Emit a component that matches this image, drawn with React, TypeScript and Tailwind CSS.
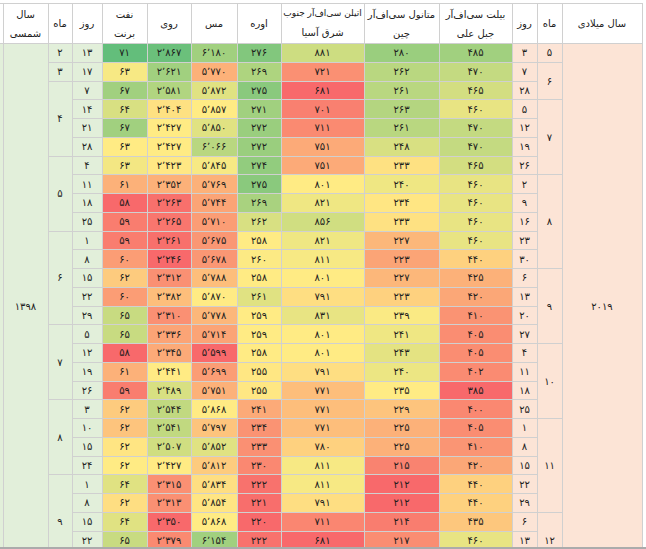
import React from "react";

const FA = "۰۱۲۳۴۵۶۷۸۹";
const fa = (v: number | string) =>
  String(v)
    .replace(/\d/g, (d) => FA[Number(d)])
    .replace(/,/g, "٬");

// excel-like red / yellow / green colour scale, s in [-1, 1]
const RED = [248, 105, 107];
const YEL = [255, 235, 132];
const GRN = [99, 190, 123];
function heat(s: number) {
  const to = s < 0 ? RED : GRN;
  const t = Math.abs(s);
  const c = YEL.map((y, i) => Math.round(y + (to[i] - y) * t));
  return `rgb(${c[0]}, ${c[1]}, ${c[2]})`;
}

const persian = [
  { m: 2, days: [13] },
  { m: 3, days: [17] },
  { m: 4, days: [7, 14, 21, 28] },
  { m: 5, days: [4, 11, 18, 25] },
  { m: 6, days: [1, 8, 15, 22, 29] },
  { m: 7, days: [5, 12, 19, 26] },
  { m: 8, days: [3, 10, 15, 24] },
  { m: 9, days: [1, 8, 15, 22, 29] },
];

const gregorian = [
  { m: 5, days: [3] },
  { m: 6, days: [7, 28] },
  { m: 7, days: [5, 12, 19, 26] },
  { m: 8, days: [2, 9, 16, 23, 30] },
  { m: 9, days: [6, 13, 20, 27] },
  { m: 10, days: [4, 11, 18, 25] },
  { m: 11, days: [1, 8, 15, 22, 29] },
  { m: 12, days: [6, 13, 20] },
];

// columns, right to left: billet, methanol, ethylene, urea, copper, zinc, brent
const cols: { v: (string | number)[]; s: number[] }[] = [
  {
    v: [485, 470, 465, 460, 470, 470, 465, 460, 460, 460, 460, 440, 425, 420, 410, 405, 405, 402, 385, 400, 405, 410, 420, 440, 440, 435, 460, 460],
    s: [0.6, 0.38, 0.28, 0.15, 0.38, 0.38, 0.28, 0.15, 0.15, 0.15, 0.15, -0.2, -0.45, -0.52, -0.68, -0.72, -0.72, -0.74, -1, -0.76, -0.72, -0.66, -0.52, -0.2, -0.2, -0.28, 0.15, 0.15],
  },
  {
    v: [280, 262, 261, 263, 261, 248, 233, 240, 234, 233, 227, 223, 227, 223, 239, 241, 243, 240, 235, 229, 225, 225, 215, 212, 212, 214, 217, 217],
    s: [0.65, 0.45, 0.45, 0.48, 0.45, 0.25, -0.08, 0.1, -0.04, -0.08, -0.4, -0.55, -0.4, -0.2, 0.03, 0.1, 0.17, 0.12, 0, -0.3, -0.45, -0.45, -0.8, -1, -1, -0.85, -0.72, -0.7],
  },
  {
    v: [881, 721, 681, 701, 711, 751, 751, 801, 821, 856, 821, 811, 801, 791, 831, 801, 801, 791, 771, 771, 771, 780, 811, 811, 791, 711, 681, 681],
    s: [0.32, -0.7, -1, -0.82, -0.75, -0.5, -0.5, 0, 0.1, 0.3, 0.1, 0.05, 0, -0.1, 0.15, 0, 0, -0.1, -0.35, -0.35, -0.35, -0.2, 0.05, 0.05, -0.1, -0.78, -1, -0.9],
  },
  {
    v: [276, 269, 275, 271, 272, 272, 274, 275, 269, 262, 258, 260, 258, 261, 259, 259, 258, 255, 255, 241, 234, 233, 230, 222, 221, 220, 222, 220],
    s: [0.8, 0.52, 0.75, 0.6, 0.65, 0.65, 0.7, 0.75, 0.55, 0.25, 0, 0.02, 0, 0.2, 0, 0, 0, -0.03, -0.03, -0.5, -0.68, -0.7, -0.76, -0.93, -0.96, -1, -0.93, -0.9],
  },
  {
    v: ["6,180", "5,770", "5,872", "5,857", "5,850", "6,066", "5,845", "5,769", "5,744", "5,710", "5,675", "5,678", "5,788", "5,870", "5,778", "5,714", "5,599", "5,699", "5,751", "5,868", "5,797", "5,852", "5,812", "5,834", "5,854", "5,868", "6,154", "6,160"],
    s: [0.6, -0.45, 0.2, 0, 0.2, 0.45, 0.05, -0.45, -0.55, -0.6, -0.65, -0.65, -0.35, 0, -0.4, -0.55, -1, -0.6, -0.45, 0, -0.3, 0.2, -0.25, -0.1, -0.05, 0, 0.6, 0.5],
  },
  {
    v: ["2,867", "2,621", "2,581", "2,404", "2,427", "2,427", "2,423", "2,352", "2,263", "2,265", "2,261", "2,246", "2,312", "2,382", "2,310", "2,336", "2,345", "2,441", "2,489", "2,544", "2,541", "2,507", "2,427", "2,315", "2,313", "2,350", "2,379", "2,274"],
    s: [0.95, 0.6, 0.5, -0.08, 0, 0, -0.02, -0.45, -0.95, -0.9, -0.95, -1, -0.7, -0.35, -0.7, -0.55, -0.5, 0, 0.25, 0.4, 0.4, 0.3, 0, -0.7, -0.7, -1, -0.75, -0.8],
  },
  {
    v: [71, 63, 67, 64, 67, 63, 63, 61, 58, 59, 59, 60, 62, 60, 65, 65, 58, 61, 59, 62, 62, 62, 62, 64, 62, 64, 65, 66],
    s: [1, 0.05, 0.6, 0.25, 0.6, 0, 0.08, -0.45, -1, -0.85, -0.85, -0.6, -0.25, -0.6, 0.35, 0.35, -1, -0.45, -0.85, -0.25, -0.3, -0.05, 0, 0.2, -0.1, 0.2, 0.35, 0.3],
  },
];

// start-of-group lookup: row index -> group
function starts(groups: { m: number; days: number[] }[]) {
  const map = new Map<number, { m: number; span: number }>();
  const days: number[] = [];
  groups.forEach((g) => {
    map.set(days.length, { m: g.m, span: g.days.length });
    days.push(...g.days);
  });
  return { map, days };
}

const P = starts(persian);
const G = starts(gregorian);
const N = P.days.length;

const bd = "border border-[#d0d0d0]";
const th = `${bd} bg-white font-normal text-[#222] leading-[19px] whitespace-nowrap overflow-hidden p-0 h-[37px]`;
const td = `${bd} p-0 text-center align-middle h-[18.75px] text-[#1e1e1e]`;

export default function App() {
  return (
    <div
      className="h-[549px] w-[646px] overflow-hidden border-b-2 border-[#ababab] bg-white pt-[3px]"
      style={{ fontFamily: '"DejaVu Sans", sans-serif' }}
    >
      <table dir="rtl" className="w-[642px] table-fixed border-collapse text-[10px]">
        <colgroup>
          <col className="w-[80px]" />
          <col className="w-[25px]" />
          <col className="w-[25px]" />
          <col className="w-[73px]" />
          <col className="w-[75px]" />
          <col className="w-[83px]" />
          <col className="w-[44px]" />
          <col className="w-[46px]" />
          <col className="w-[44px]" />
          <col className="w-[45px]" />
          <col className="w-[30px]" />
          <col className="w-[24px]" />
          <col className="w-[45px]" />
          <col className="w-[3px]" />
        </colgroup>
        <thead>
          <tr>
            <th className={th}>سال میلادی</th>
            <th className={th}>ماه</th>
            <th className={th}>روز</th>
            <th className={th}>
              بیلت سی‌اف‌آر
              <br />
              جبل علی
            </th>
            <th className={th}>
              متانول سی‌اف‌آر
              <br />
              چین
            </th>
            <th className={`${th} text-[9px]`}>
              اتیلن سی‌اف‌آر جنوب
              <br />
              <span className="text-[10px]">شرق آسیا</span>
            </th>
            <th className={th}>اوره</th>
            <th className={th}>مس</th>
            <th className={th}>روی</th>
            <th className={th}>
              نفت
              <br />
              برنت
            </th>
            <th className={th}>روز</th>
            <th className={th}>ماه</th>
            <th className={th}>
              سال
              <br />
              شمسی
            </th>
            <th className={`${th} border-l-0`} />
          </tr>
        </thead>
        <tbody>
          {Array.from({ length: N }, (_, r) => {
            const gm = G.map.get(r);
            const pm = P.map.get(r);
            return (
              <tr key={r}>
                {r === 0 && (
                  <td rowSpan={N} className={`${td} bg-[#fce4d6]`}>
                    {fa(2019)}
                  </td>
                )}
                {gm && (
                  <td rowSpan={gm.span} className={`${td} bg-[#fce4d6]`}>
                    {fa(gm.m)}
                  </td>
                )}
                <td className={`${td} bg-[#fce4d6]`}>{fa(G.days[r])}</td>
                {cols.map((c, i) => (
                  <td key={i} className={td} style={{ backgroundColor: heat(c.s[r]) }}>
                    {fa(c.v[r])}
                  </td>
                ))}
                <td className={`${td} bg-[#e2efda]`}>{fa(P.days[r])}</td>
                {pm && (
                  <td rowSpan={pm.span} className={`${td} bg-[#e2efda]`}>
                    {fa(pm.m)}
                  </td>
                )}
                {r === 0 && (
                  <>
                    <td rowSpan={N} className={`${td} bg-[#e2efda]`}>
                      {fa(1398)}
                    </td>
                    <td rowSpan={N} className={`${td} border-l-0 bg-[#e2efda]`} />
                  </>
                )}
              </tr>
            );
          })}
        </tbody>
      </table>
    </div>
  );
}
